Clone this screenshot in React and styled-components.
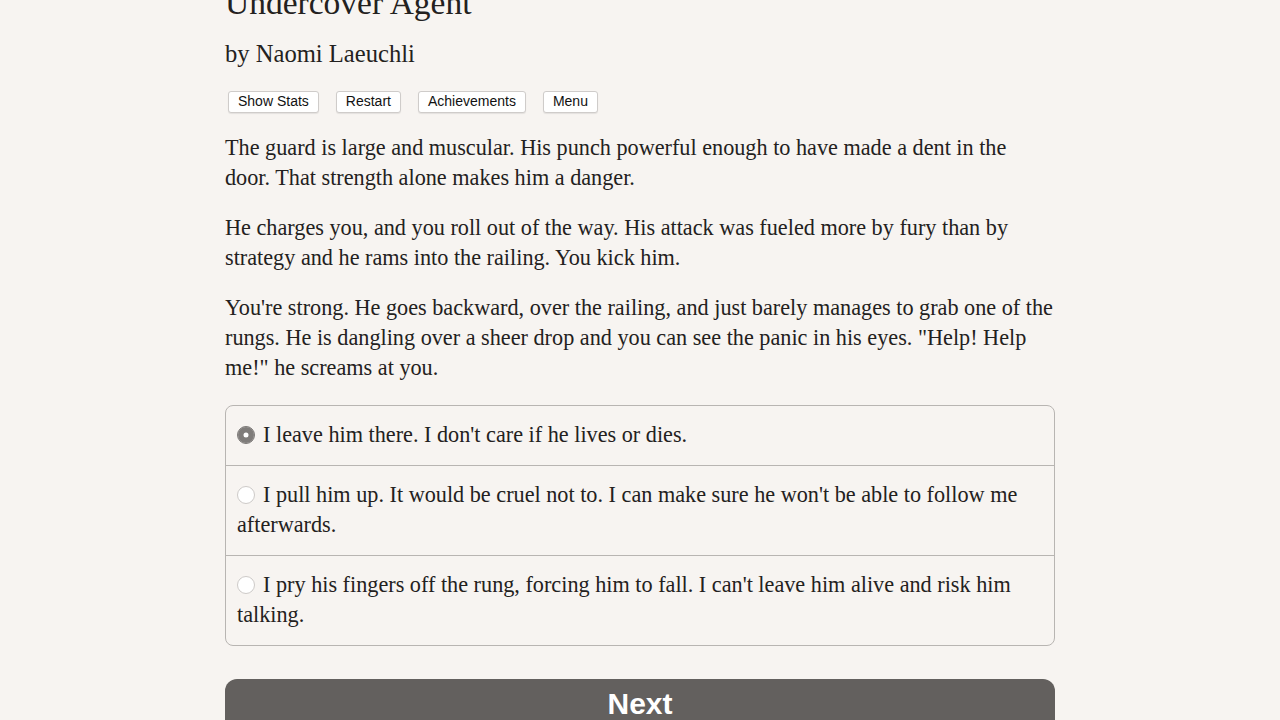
import React, { useState } from "react";
import styled, { createGlobalStyle } from "styled-components";

const COLORS = {
  page: "#f7f4f1",
  ink: "#232120",
  border: "#b8b5b2",
  radio: "#7f7c7a",
  button: "#63605e",
};

const SERIF = `"Liberation Serif", "Times New Roman", serif`;
const SANS = `"Liberation Sans", Arial, sans-serif`;

const GlobalStyle = createGlobalStyle`
  html, body {
    margin: 0;
    background: ${COLORS.page};
    color: ${COLORS.ink};
    font-family: ${SERIF};
  }
  * { box-sizing: border-box; }
`;

const CHOICES = [
  "I leave him there. I don't care if he lives or dies.",
  "I pull him up. It would be cruel not to. I can make sure he won't be able to follow me afterwards.",
  "I pry his fingers off the rung, forcing him to fall. I can't leave him alive and risk him talking.",
];

const App = () => {
  const [selected, setSelected] = useState(0);

  return (
    <>
      <GlobalStyle />
      <Page>
        <Title>Undercover Agent</Title>
        <Byline>by Naomi Laeuchli</Byline>
        <Toolbar>
          <ToolButton>Show Stats</ToolButton>
          <ToolButton>Restart</ToolButton>
          <ToolButton>Achievements</ToolButton>
          <ToolButton>Menu</ToolButton>
        </Toolbar>
        <Story>
          <p>
            The guard is large and muscular. His punch powerful enough to have
            made a dent in the door. That strength alone makes him a danger.
          </p>
          <p>
            He charges you, and you roll out of the way. His attack was fueled
            more by fury than by strategy and he rams into the railing. You
            kick him.
          </p>
          <p>
            You're strong. He goes backward, over the railing, and just barely
            manages to grab one of the rungs. He is dangling over a sheer drop
            and you can see the panic in his eyes. "Help! Help me!" he screams
            at you.
          </p>
        </Story>
        <Choices>
          {CHOICES.map((text, i) => (
            <Choice key={i} onClick={() => setSelected(i)}>
              <Radio $checked={selected === i} />
              {text}
            </Choice>
          ))}
        </Choices>
        <NextButton>Next</NextButton>
      </Page>
    </>
  );
};

// the story view is scrolled a little, so the title sits partly above the fold
const Page = styled.main`
  width: 830px;
  margin: -19px auto 0;
`;

const Title = styled.h1`
  margin: 0;
  font-weight: normal;
  font-size: 33.5px;
  line-height: 44px;
`;

const Byline = styled.h2`
  margin: 14px 0 0;
  font-weight: normal;
  font-size: 24.6px;
  line-height: 30px;
`;

const Toolbar = styled.nav`
  display: flex;
  gap: 17px;
  margin-top: 22px;
  padding-left: 3px;
`;

const ToolButton = styled.button`
  font-family: ${SANS};
  font-size: 14px;
  line-height: 17px;
  color: #111;
  background: #fff;
  border: 1px solid #cfccca;
  border-radius: 3px;
  padding: 1px 9px 2px;
  box-shadow: 0 1px 1px rgba(0, 0, 0, 0.08);
`;

const Story = styled.section`
  margin-top: 20px;
  font-size: 22.22px;
  line-height: 30px;

  p {
    margin: 0 0 20px;
  }
`;

const Choices = styled.div`
  margin-top: 22px;
  border: 1px solid ${COLORS.border};
  border-radius: 8px;
  overflow: hidden;
`;

const Choice = styled.label`
  display: block;
  padding: 14px 11px 15px;
  font-size: 22.22px;
  line-height: 30px;
  cursor: pointer;

  & + & {
    border-top: 1px solid ${COLORS.border};
  }
`;

const Radio = styled.span`
  display: inline-block;
  width: 18px;
  height: 18px;
  margin-right: 8px;
  vertical-align: -2px;
  border-radius: 50%;
  background: ${(p) => (p.$checked ? COLORS.radio : "#fff")};
  border: 1px solid ${(p) => (p.$checked ? COLORS.radio : "#cdcac8")};
  box-shadow: ${(p) =>
    p.$checked ? `inset 0 0 0 5.5px ${COLORS.radio}, inset 0 0 0 9px #fff` : "none"};
`;

const NextButton = styled.button`
  display: block;
  width: 100%;
  margin-top: 33px;
  height: 60px;
  border: none;
  border-radius: 12px;
  background: ${COLORS.button};
  color: #fff;
  font-family: ${SANS};
  font-weight: bold;
  font-size: 30px;
  padding-bottom: 12px;
`;

export default App;
